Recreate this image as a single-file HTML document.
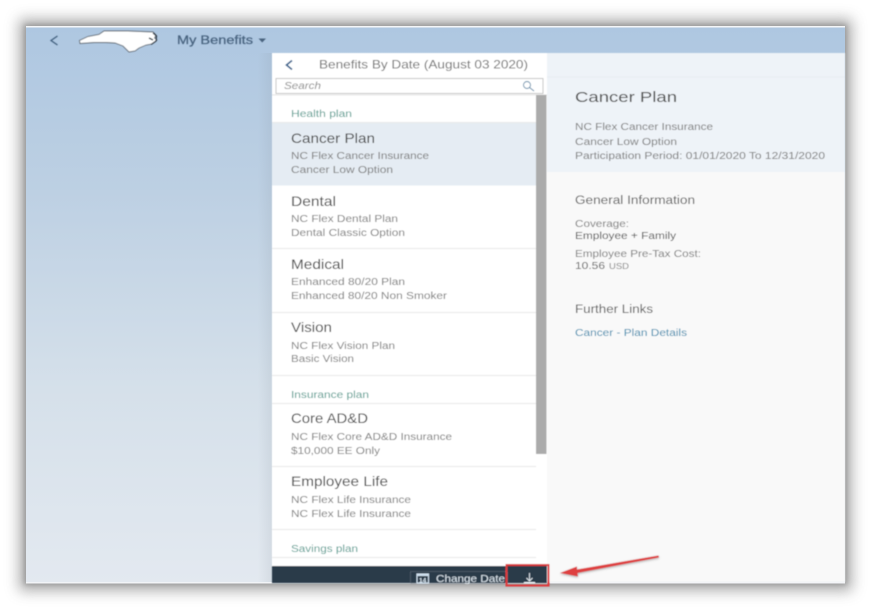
<!DOCTYPE html>
<html>
<head>
<meta charset="utf-8">
<style>
html,body{margin:0;padding:0;width:870px;height:610px;overflow:hidden;background:#fff}
svg{display:block;position:absolute;left:0;top:0}
text{font-family:"Liberation Sans",sans-serif}
.h{font-size:10px;fill:#549c90}
.t{font-size:14px;fill:#454545}
.s{font-size:10px;fill:#7a7a7a}
</style>
</head>
<body>
<svg width="870" height="610" viewBox="0 0 870 610" xmlns="http://www.w3.org/2000/svg">
<defs>
<linearGradient id="bg" x1="0" y1="0" x2="0" y2="1">
<stop offset="0" stop-color="#aec7e1"/>
<stop offset="0.3" stop-color="#bdd0e3"/>
<stop offset="0.65" stop-color="#d5e0ea"/>
<stop offset="1" stop-color="#e3e9f0"/>
</linearGradient>
<linearGradient id="ps" x1="0" y1="0" x2="1" y2="0">
<stop offset="0" stop-color="#7f8a96" stop-opacity="0"/>
<stop offset="1" stop-color="#7f8a96" stop-opacity="0.14"/>
</linearGradient>
<filter id="sh" x="-10%" y="-10%" width="120%" height="120%">
<feGaussianBlur stdDeviation="7"/>
</filter>
<filter id="sh2" x="-10%" y="-10%" width="120%" height="120%">
<feGaussianBlur stdDeviation="2.500"/>
</filter>
<filter id="soft" x="-5%" y="-5%" width="110%" height="110%">
<feGaussianBlur stdDeviation="0.4"/>
</filter>
<filter id="arrow" x="-20%" y="-50%" width="140%" height="200%">
<feDropShadow dx="0" dy="1" stdDeviation="1" flood-color="#555" flood-opacity="0.45"/>
</filter>
</defs>

<rect x="19" y="19" width="833" height="572" fill="#777" opacity="0.6" filter="url(#sh)"/>
<rect x="24" y="24" width="823" height="561" fill="#666" opacity="0.35" filter="url(#sh2)"/>
<rect x="26" y="26" width="819" height="557.500" fill="url(#bg)"/>
<rect x="26" y="26" width="819" height="1.500" fill="#f4f6f8"/>
<rect x="26" y="582" width="819" height="1.500" fill="#f2f4f7"/>
<rect x="258" y="53" width="14" height="529" fill="url(#ps)"/>

<g filter="url(#soft)">
<path d="M57.500 36 L51 40.500 L57.500 45" fill="none" stroke="#43607e" stroke-width="1.300"/>
<path d="M79.500 40.500 L88 36.500 L99 34.500 L104 31 L128 31 L153 32 L156 35 L154.500 38 L157 40 L154.500 42 L152 44 L146 45 L139 48 L135 51 L129 52 L123 46 L115 43 L106 42.500 L94 42.500 L80 43.500 Z" fill="#fff" stroke="#5c6671" stroke-width="0.900"/>
<path d="M153 33 L156.500 36 L156 41 L151 44.500 M149 38 L153 40" fill="none" stroke="#2f3a46" stroke-width="1.300"/>
<text x="177" y="44" font-size="11.500px" fill="#48637f" stroke="#48637f" stroke-width="0.250" textLength="76" lengthAdjust="spacingAndGlyphs">My Benefits</text>
<path d="M258.500 38.500 H266 L262.200 42.500 Z" fill="#48637f"/>

<rect x="547" y="53" width="298" height="529" fill="#f9f9f9"/>
<rect x="547" y="53" width="298" height="119" fill="#eef3f8"/>
<rect x="547" y="76.500" width="298" height="1" fill="#e6ecf2"/>

<rect x="272" y="53" width="275" height="513" fill="#fff"/>
<path d="M292 60.500 L286.500 65 L292 69.500" fill="none" stroke="#2f5f8c" stroke-width="1.700"/>
<text x="319" y="68.500" font-size="12px" fill="#707070" textLength="209" lengthAdjust="spacingAndGlyphs">Benefits By Date (August 03 2020)</text>
<rect x="276" y="78.500" width="267" height="15" fill="#fff" stroke="#c6c6c6" stroke-width="1"/>
<text x="284" y="89" font-size="10px" font-style="italic" fill="#8a8a8a" textLength="37" lengthAdjust="spacingAndGlyphs">Search</text>
<circle cx="527" cy="85" r="3.500" fill="none" stroke="#5f8aa8" stroke-width="0.900"/>
<path d="M529.500 87.500 L534 91" stroke="#5f8aa8" stroke-width="1"/>

<rect x="272" y="123" width="264" height="62.500" fill="#e5ecf3"/>
<rect x="272" y="94.500" width="275" height="0.800" fill="#dedede"/>
<rect x="536" y="95" width="10.500" height="359" fill="#ababab"/>

<g fill="#e8e8e8">
<rect x="272" y="122" width="264" height="1"/>
<rect x="272" y="248" width="264" height="1"/>
<rect x="272" y="312" width="264" height="1"/>
<rect x="272" y="375" width="264" height="1"/>
<rect x="272" y="403" width="264" height="1"/>
<rect x="272" y="466" width="264" height="1"/>
<rect x="272" y="529" width="264" height="1"/>
<rect x="272" y="557" width="264" height="1"/>
</g>

<text class="h" x="291" y="117" textLength="61" lengthAdjust="spacingAndGlyphs">Health plan</text>
<text class="t" x="291" y="143" textLength="84" lengthAdjust="spacingAndGlyphs">Cancer Plan</text>
<text class="s" x="291" y="159" textLength="138" lengthAdjust="spacingAndGlyphs">NC Flex Cancer Insurance</text>
<text class="s" x="291" y="173" textLength="102" lengthAdjust="spacingAndGlyphs">Cancer Low Option</text>
<text class="t" x="291" y="206" textLength="45" lengthAdjust="spacingAndGlyphs">Dental</text>
<text class="s" x="291" y="222" textLength="107" lengthAdjust="spacingAndGlyphs">NC Flex Dental Plan</text>
<text class="s" x="291" y="236" textLength="114" lengthAdjust="spacingAndGlyphs">Dental Classic Option</text>
<text class="t" x="291" y="269" textLength="53" lengthAdjust="spacingAndGlyphs">Medical</text>
<text class="s" x="291" y="285" textLength="114" lengthAdjust="spacingAndGlyphs">Enhanced 80/20 Plan</text>
<text class="s" x="291" y="299" textLength="156" lengthAdjust="spacingAndGlyphs">Enhanced 80/20 Non Smoker</text>
<text class="t" x="291" y="332" textLength="41" lengthAdjust="spacingAndGlyphs">Vision</text>
<text class="s" x="291" y="349" textLength="104" lengthAdjust="spacingAndGlyphs">NC Flex Vision Plan</text>
<text class="s" x="291" y="362" textLength="63" lengthAdjust="spacingAndGlyphs">Basic Vision</text>
<text class="h" x="291" y="398" textLength="78" lengthAdjust="spacingAndGlyphs">Insurance plan</text>
<text class="t" x="291" y="423" textLength="77" lengthAdjust="spacingAndGlyphs">Core AD&amp;D</text>
<text class="s" x="291" y="440" textLength="161" lengthAdjust="spacingAndGlyphs">NC Flex Core AD&amp;D Insurance</text>
<text class="s" x="291" y="454" textLength="89" lengthAdjust="spacingAndGlyphs">$10,000 EE Only</text>
<text class="t" x="291" y="486" textLength="97" lengthAdjust="spacingAndGlyphs">Employee Life</text>
<text class="s" x="291" y="503" textLength="120" lengthAdjust="spacingAndGlyphs">NC Flex Life Insurance</text>
<text class="s" x="291" y="517" textLength="120" lengthAdjust="spacingAndGlyphs">NC Flex Life Insurance</text>
<text class="h" x="291" y="552" textLength="67" lengthAdjust="spacingAndGlyphs">Savings plan</text>

<text x="575" y="102" font-size="15px" fill="#4a4a4a" textLength="102" lengthAdjust="spacingAndGlyphs">Cancer Plan</text>
<text class="s" x="575" y="130" textLength="138" lengthAdjust="spacingAndGlyphs">NC Flex Cancer Insurance</text>
<text class="s" x="575" y="145" textLength="102" lengthAdjust="spacingAndGlyphs">Cancer Low Option</text>
<text class="s" x="575" y="159" textLength="250" lengthAdjust="spacingAndGlyphs">Participation Period: 01/01/2020 To 12/31/2020</text>
<text x="575" y="204" font-size="11.500px" fill="#5c5c5c" textLength="120" lengthAdjust="spacingAndGlyphs">General Information</text>
<text class="s" x="575" y="227" textLength="54" lengthAdjust="spacingAndGlyphs">Coverage:</text>
<text x="575" y="239" font-size="10px" fill="#505050" textLength="101" lengthAdjust="spacingAndGlyphs">Employee + Family</text>
<text class="s" x="575" y="257" textLength="126" lengthAdjust="spacingAndGlyphs">Employee Pre-Tax Cost:</text>
<text x="575" y="269" font-size="10px" fill="#5c5c5c" textLength="30" lengthAdjust="spacingAndGlyphs">10.56</text>
<text x="609" y="269" font-size="8px" fill="#808080" textLength="20" lengthAdjust="spacingAndGlyphs">USD</text>
<text x="575" y="313" font-size="11.500px" fill="#5c5c5c" textLength="78" lengthAdjust="spacingAndGlyphs">Further Links</text>
<text x="575" y="336" font-size="10px" fill="#3a8aae" textLength="112" lengthAdjust="spacingAndGlyphs">Cancer - Plan Details</text>

<rect x="272" y="566" width="275" height="17" fill="#2b3a49"/>
<rect x="410.500" y="571.500" width="97" height="12" fill="none" stroke="#6d7a86" stroke-width="0.800" stroke-dasharray="1 1"/>
<rect x="417" y="574" width="11.500" height="9" fill="none" stroke="#cfe0ee" stroke-width="1.100"/>
<rect x="417" y="574" width="11.500" height="2" fill="#cfe0ee"/>
<text x="419" y="582.500" font-size="6.500px" font-weight="bold" fill="#dbe8f2">14</text>
<text x="436" y="582" font-size="10.500px" fill="#dfe9f1" textLength="69" lengthAdjust="spacingAndGlyphs">Change Date</text>
<path d="M529.500 573 V580.500 M526.500 578 L529.500 581 L532.500 578" fill="none" stroke="#e6eef4" stroke-width="0.900"/>
<rect x="524" y="582" width="11" height="1" fill="#e6eef4"/>
<rect x="506.500" y="565" width="42" height="20.500" fill="none" stroke="#dd3b3e" stroke-width="2"/>

<path d="M658.500 555.500 L577 569.500 L577 566.500 L560 573 L578 576.500 L577.500 573 L659 557.500 Z" fill="#de3f41" filter="url(#arrow)"/>
</g>
</svg>
</body>
</html>
